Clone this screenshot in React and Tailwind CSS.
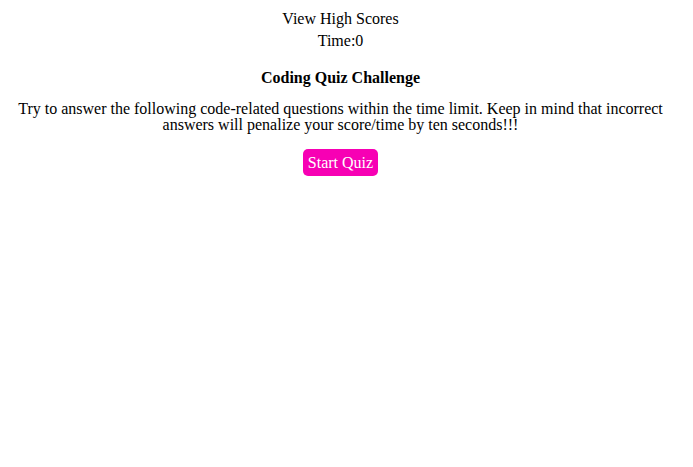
import React, { useState } from "react";

const App = () => {
  const [time] = useState(0);

  return (
    <div className="min-h-[467px] bg-white pl-2 pr-[20px] pt-[8px] text-center text-base text-black [font-family:'Liberation_Serif','Times_New_Roman',serif]">
      <header className="flex flex-col items-center">
        <a className="leading-[22px] cursor-pointer">View High Scores</a>
        <div className="leading-[22px]">Time:{time}</div>
      </header>

      <main className="mt-[15px]">
        <h3 className="font-bold leading-[22px]">Coding Quiz Challenge</h3>
        <p className="mt-[12px] leading-[16px]">
          Try to answer the following code-related questions within the time limit. Keep in mind that incorrect
          answers will penalize your score/time by ten seconds!!!
        </p>
        <button className="mt-[16px] h-[27px] w-[75px] rounded-[5px] bg-[#f700b4] text-white">
          Start Quiz
        </button>
      </main>
    </div>
  );
};

export default App;
